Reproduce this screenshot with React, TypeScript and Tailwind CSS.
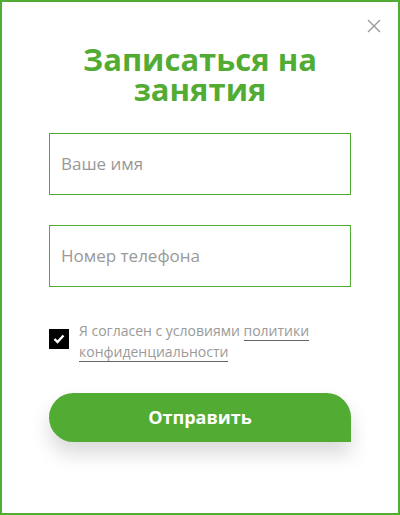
import React from "react";

export default function App() {
  return (
    <div className="w-[400px] h-[515px] bg-white border-2 border-[#52ac33] relative" style={{ fontFamily: '"Open Sans", "Noto Sans", sans-serif' }}>
      <button className="absolute right-[16px] top-[16px] w-[16px] h-[16px] flex items-center justify-center">
        <svg width="14" height="14" viewBox="0 0 14 14">
          <path d="M1 1 L13 13 M13 1 L1 13" stroke="#9a9a9a" strokeWidth="1.4" />
        </svg>
      </button>
      <div className="px-[47px] pt-[42px] flex flex-col">
        <h1 className="text-center text-[31px] leading-[30px] font-bold text-[#52ac33]">
          <span className="block">Записаться на</span>
          <span className="block">занятия</span>
        </h1>
        <div className="mt-[29px] h-[62px] border border-[#52ac33] flex items-center px-[11px] text-[17px] text-[#999999]">Ваше имя</div>
        <div className="mt-[30px] h-[62px] border border-[#52ac33] flex items-center px-[11px] text-[17px] text-[#999999]">Номер телефона</div>
        <div className="mt-[33px] flex items-start gap-[10px]">
          <div className="mt-[9px] w-[20px] h-[20px] bg-black flex items-center justify-center shrink-0">
            <svg width="12" height="10" viewBox="0 0 12 10">
              <path d="M1.5 5 L4.5 8 L10.5 1.5" stroke="white" strokeWidth="2.4" fill="none" />
            </svg>
          </div>
          <p className="text-[14px] leading-[21px] text-[#9a9a9a]">
            Я согласен с условиями <span className="border-b border-[#666]">политики</span>
            <br />
            <span className="border-b border-[#666]">конфиденциальности</span>
          </p>
        </div>
        <button className="mt-[31px] h-[49px] w-[302px] bg-[#52ac33] rounded-l-[25px] rounded-tr-[25px] text-white text-[18px] font-bold shadow-[0_12px_20px_rgba(0,0,0,0.15)]">
          Отправить
        </button>
      </div>
    </div>
  );
}
